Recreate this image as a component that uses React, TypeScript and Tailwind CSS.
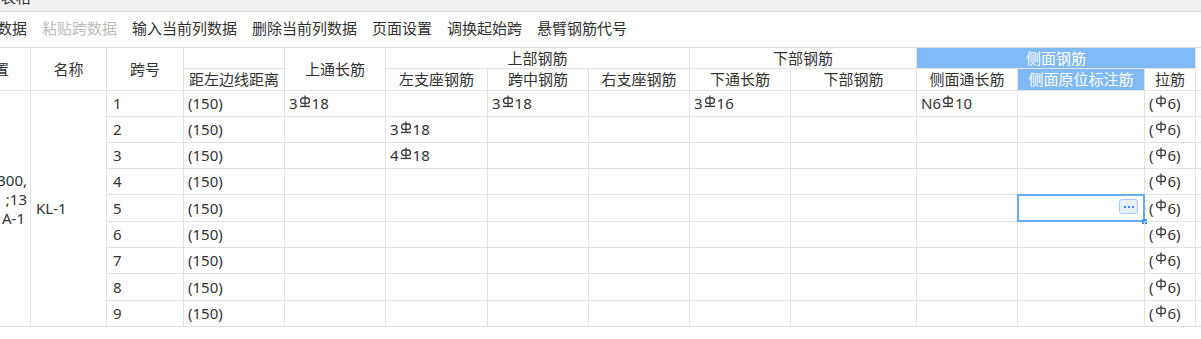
import React from "react";

type Steel = { pre: string; post: string; kind: "iii" | "i"; wrap?: boolean };
type Val = string | Steel | null;

interface SpanRow {
  no: number;
  vals: Val[]; // 距左, 上通, 左支, 跨中, 右支, 下通, 下部, 侧通, 侧原, 拉筋, extra
}

const line = "border-r border-b border-[#e3e3e3]";

const GradeThree = () => (
  <svg width="12" height="14" viewBox="0 0 12 14" className="mx-[1px] -translate-y-[2px]">
    <line x1="6" y1="0.5" x2="6" y2="11" stroke="#3a3a3a" strokeWidth="1.3" />
    <rect x="1.6" y="3" width="8.8" height="5.4" rx="2.4" fill="none" stroke="#3a3a3a" strokeWidth="1.3" />
    <line x1="1" y1="11.4" x2="11" y2="11.4" stroke="#3a3a3a" strokeWidth="1.4" />
  </svg>
);

const GradeOne = () => (
  <svg width="12" height="14" viewBox="0 0 12 14" className="mx-[1px] -translate-y-[2px]">
    <line x1="6" y1="0.5" x2="6" y2="12" stroke="#3a3a3a" strokeWidth="1.3" />
    <rect x="1.6" y="3.2" width="8.8" height="5.4" rx="2.4" fill="none" stroke="#3a3a3a" strokeWidth="1.3" />
  </svg>
);

const SteelText = ({ s }: { s: Steel }) => (
  <span className="flex items-center">
    {s.wrap && <span>(</span>}
    <span>{s.pre}</span>
    {s.kind === "iii" ? <GradeThree /> : <GradeOne />}
    <span>{s.post}</span>
    {s.wrap && <span>)</span>}
  </span>
);

const tie: Steel = { pre: "", post: "6", kind: "i", wrap: true };

const rows: SpanRow[] = [1, 2, 3, 4, 5, 6, 7, 8, 9].map((no) => {
  const vals: Val[] = ["(150)", null, null, null, null, null, null, null, null, tie, null];
  if (no === 1) {
    vals[1] = { pre: "3", post: "18", kind: "iii" };
    vals[3] = { pre: "3", post: "18", kind: "iii" };
    vals[5] = { pre: "3", post: "16", kind: "iii" };
    vals[7] = { pre: "N6", post: "10", kind: "iii" };
  }
  if (no === 2) vals[2] = { pre: "3", post: "18", kind: "iii" };
  if (no === 3) vals[2] = { pre: "4", post: "18", kind: "iii" };
  return { no, vals };
});

const toolbar = [
  { label: "复制跨数据", off: false },
  { label: "粘贴跨数据", off: true },
  { label: "输入当前列数据", off: false },
  { label: "删除当前列数据", off: false },
  { label: "页面设置", off: false },
  { label: "调换起始跨", off: false },
  { label: "悬臂钢筋代号", off: false },
];

const Head = ({ children, className = "" }: { children?: React.ReactNode; className?: string }) => (
  <div className={`${line} flex items-center justify-center text-[#333] ${className}`}>{children}</div>
);

const App = () => {
  return (
    <div className="w-[1201px] h-[339px] overflow-hidden bg-white text-[15px] leading-none font-['Noto_Sans','Noto_Sans_CJK_SC',sans-serif] text-[#333]">
      {/* title bar, mostly scrolled off */}
      <div className="h-[12px] bg-[#f0f0f0] border-b border-[#dcdcdc] overflow-hidden">
        <div className="-mt-[10px] pl-[1px] text-[#333]">表格</div>
      </div>

      {/* toolbar */}
      <div className="h-[35px] flex items-center">
        <div className="flex gap-[15px] -ml-[48px] -mt-[3px]">
          {toolbar.map((t) => (
            <span key={t.label} className={t.off ? "text-[#bdbdbd]" : "text-[#333]"}>
              {t.label}
            </span>
          ))}
        </div>
      </div>

      {/* table */}
      <div className="overflow-hidden">
        <div className="-ml-[42px] w-max border-t border-[#e3e3e3] grid grid-cols-[73px_76px_77px_101px_101px_102px_101px_101px_101px_126px_101px_127px_51px_80px] grid-rows-[21px_22px_26px_26px_26px_26px_27px_26px_26px_27px_26px]">
          {/* header row 1 */}
          <Head className="row-span-2">位置</Head>
          <Head className="row-span-2">名称</Head>
          <Head className="row-span-2">跨号</Head>
          <Head />
          <Head className="row-span-2">上通长筋</Head>
          <Head className="col-span-3">上部钢筋</Head>
          <Head className="col-span-2">下部钢筋</Head>
          <Head className="col-span-3 bg-[#80baf6] text-white">侧面钢筋</Head>
          <Head className="row-span-2" />
          {/* header row 2 */}
          <Head>距左边线距离</Head>
          <Head>左支座钢筋</Head>
          <Head>跨中钢筋</Head>
          <Head>右支座钢筋</Head>
          <Head>下通长筋</Head>
          <Head>下部钢筋</Head>
          <Head>侧面通长筋</Head>
          <Head className="bg-[#80baf6] text-white">侧面原位标注筋</Head>
          <Head>拉筋</Head>

          {/* body */}
          <div className={`${line} row-span-9 flex flex-col justify-center items-end pr-[3px] leading-[19px] text-[#333]`}>
            <span>300*300,</span>
            <span>;13</span>
            <span className="pr-[2px]">A-1</span>
            <span>&nbsp;</span>
          </div>
          <div className={`${line} row-span-9 flex items-center pl-[5px] text-[#333]`}>KL-1</div>
          {rows.map((r) => (
            <React.Fragment key={r.no}>
              <div className={`${line} flex items-center pl-[6px]`}>{r.no}</div>
              {r.vals.map((v, i) => (
                <div key={i} className={`${line} relative flex items-center pl-[4px] text-[#333]`}>
                  {typeof v === "string" ? v : v ? <SteelText s={v} /> : null}
                  {r.no === 5 && i === 8 && (
                    <div className="absolute -left-px -top-px -right-px -bottom-px border-2 border-[#6aa9ef]">
                      <div className="absolute right-[5px] top-[3px] w-[19px] h-[15px] rounded-[3px] border border-[#a9c9ef] bg-[#e6f0fc] flex items-center justify-center gap-[2px]">
                        <span className="w-[2px] h-[2px] bg-[#3f8ae0]" />
                        <span className="w-[2px] h-[2px] bg-[#3f8ae0]" />
                        <span className="w-[2px] h-[2px] bg-[#3f8ae0]" />
                      </div>
                      <div className="absolute -right-[4px] -bottom-[4px] w-[5px] h-[5px] bg-[#4a93e6]" />
                    </div>
                  )}
                </div>
              ))}
            </React.Fragment>
          ))}
        </div>
      </div>
    </div>
  );
};

export default App;
